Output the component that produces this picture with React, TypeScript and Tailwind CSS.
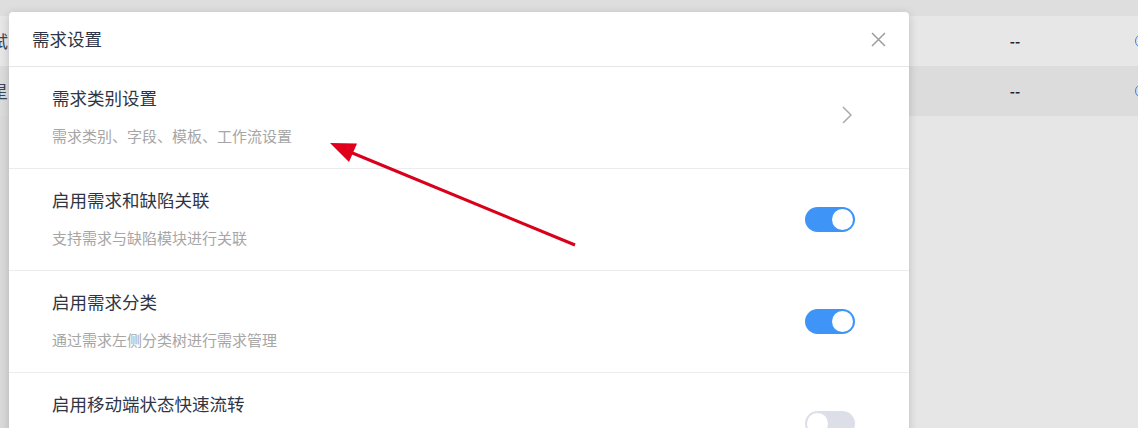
import React from "react";

type Item = {
  title: string;
  desc?: string;
  kind: "link" | "on" | "off";
};

const items: Item[] = [
  { title: "需求类别设置", desc: "需求类别、字段、模板、工作流设置", kind: "link" },
  { title: "启用需求和缺陷关联", desc: "支持需求与缺陷模块进行关联", kind: "on" },
  { title: "启用需求分类", desc: "通过需求左侧分类树进行需求管理", kind: "on" },
  { title: "启用移动端状态快速流转", desc: "移动端可快速流转需求状态", kind: "off" },
];

function Toggle({ on }: { on: boolean }) {
  return (
    <div
      className={`relative h-[25px] w-[50px] rounded-full ${
        on ? "bg-[#3f95f7]" : "bg-[#dcdfe7]"
      }`}
    >
      <div
        className={`absolute top-[2px] h-[21px] w-[21px] rounded-full bg-white ${
          on ? "right-[2px]" : "left-[2px]"
        }`}
      />
    </div>
  );
}

function BgRow({ left, tone }: { left: string; tone: string }) {
  return (
    <div className={`grid h-[50px] grid-cols-[960px_110px_1fr] items-center ${tone}`}>
      <span className="-ml-[9px] text-[17px] text-[#3a4560]">{left}</span>
      <span className="text-center text-[14px] font-bold text-[#1f2433]">--</span>
      <span className="pl-[65px]">
        <span className="block h-[14px] w-[14px] rounded-full border-[1.5px] border-[#3d7ff0]" />
      </span>
    </div>
  );
}

export default function App() {
  return (
    <div
      className="relative h-[428px] w-[1138px] overflow-hidden bg-[#e6e6e6]"
      style={{ fontFamily: '"Noto Sans CJK SC", "Noto Sans", sans-serif' }}
    >
      {/* page behind the dialog */}
      <div className="flex h-full flex-col">
        <div className="h-[16px] bg-[#dedede]" />
        <BgRow left="试" tone="bg-[#e7e7e7]" />
        <BgRow left="星" tone="bg-[#dcdcdd]" />
        <div className="flex flex-1">
          <div className="w-[9px] bg-[#dadada]" />
          <div className="flex-1 bg-[#e6e6e6]" />
        </div>
      </div>

      {/* dialog */}
      <div className="absolute left-[9px] top-[12px] w-[900px] rounded-t-[4px] bg-white shadow-[0_2px_10px_rgba(0,0,0,0.18)]">
        <div className="flex h-[55px] items-center justify-between border-b border-[#e6e6e6] px-[23px]">
          <span className="text-[17.5px] leading-[24px] text-[#2f3545]">需求设置</span>
          <svg width="15" height="15" viewBox="0 0 15 15">
            <path d="M1 1L14 14M14 1L1 14" stroke="#9d9d9d" strokeWidth="1.5" />
          </svg>
        </div>

        {items.map((it) => (
          <div
            key={it.title}
            className="flex h-[102px] items-center justify-between border-b border-[#ececec] pl-[43px] pr-[54px]"
          >
            <div className="mb-[3px] flex flex-col">
              <span className="text-[17.5px] leading-[24px] text-[#2f3545]">{it.title}</span>
              <span className="mt-[16px] text-[15px] leading-[20px] text-[#a6a6a6]">{it.desc}</span>
            </div>
            {it.kind === "link" ? (
              <svg width="10" height="18" viewBox="0 0 10 18" className="mb-[6px] mr-[3px]">
                <path d="M1 1L9 9L1 17" fill="none" stroke="#a8a8a8" strokeWidth="1.5" />
              </svg>
            ) : (
              <Toggle on={it.kind === "on"} />
            )}
          </div>
        ))}
      </div>

      {/* annotation arrow */}
      <svg
        className="pointer-events-none absolute left-0 top-0"
        width="1138"
        height="428"
        viewBox="0 0 1138 428"
      >
        <line x1="575" y1="245" x2="350" y2="152" stroke="#d9001b" strokeWidth="3" />
        <polygon points="330,143 357,143.5 349,162" fill="#e0001b" />
      </svg>
    </div>
  );
}
